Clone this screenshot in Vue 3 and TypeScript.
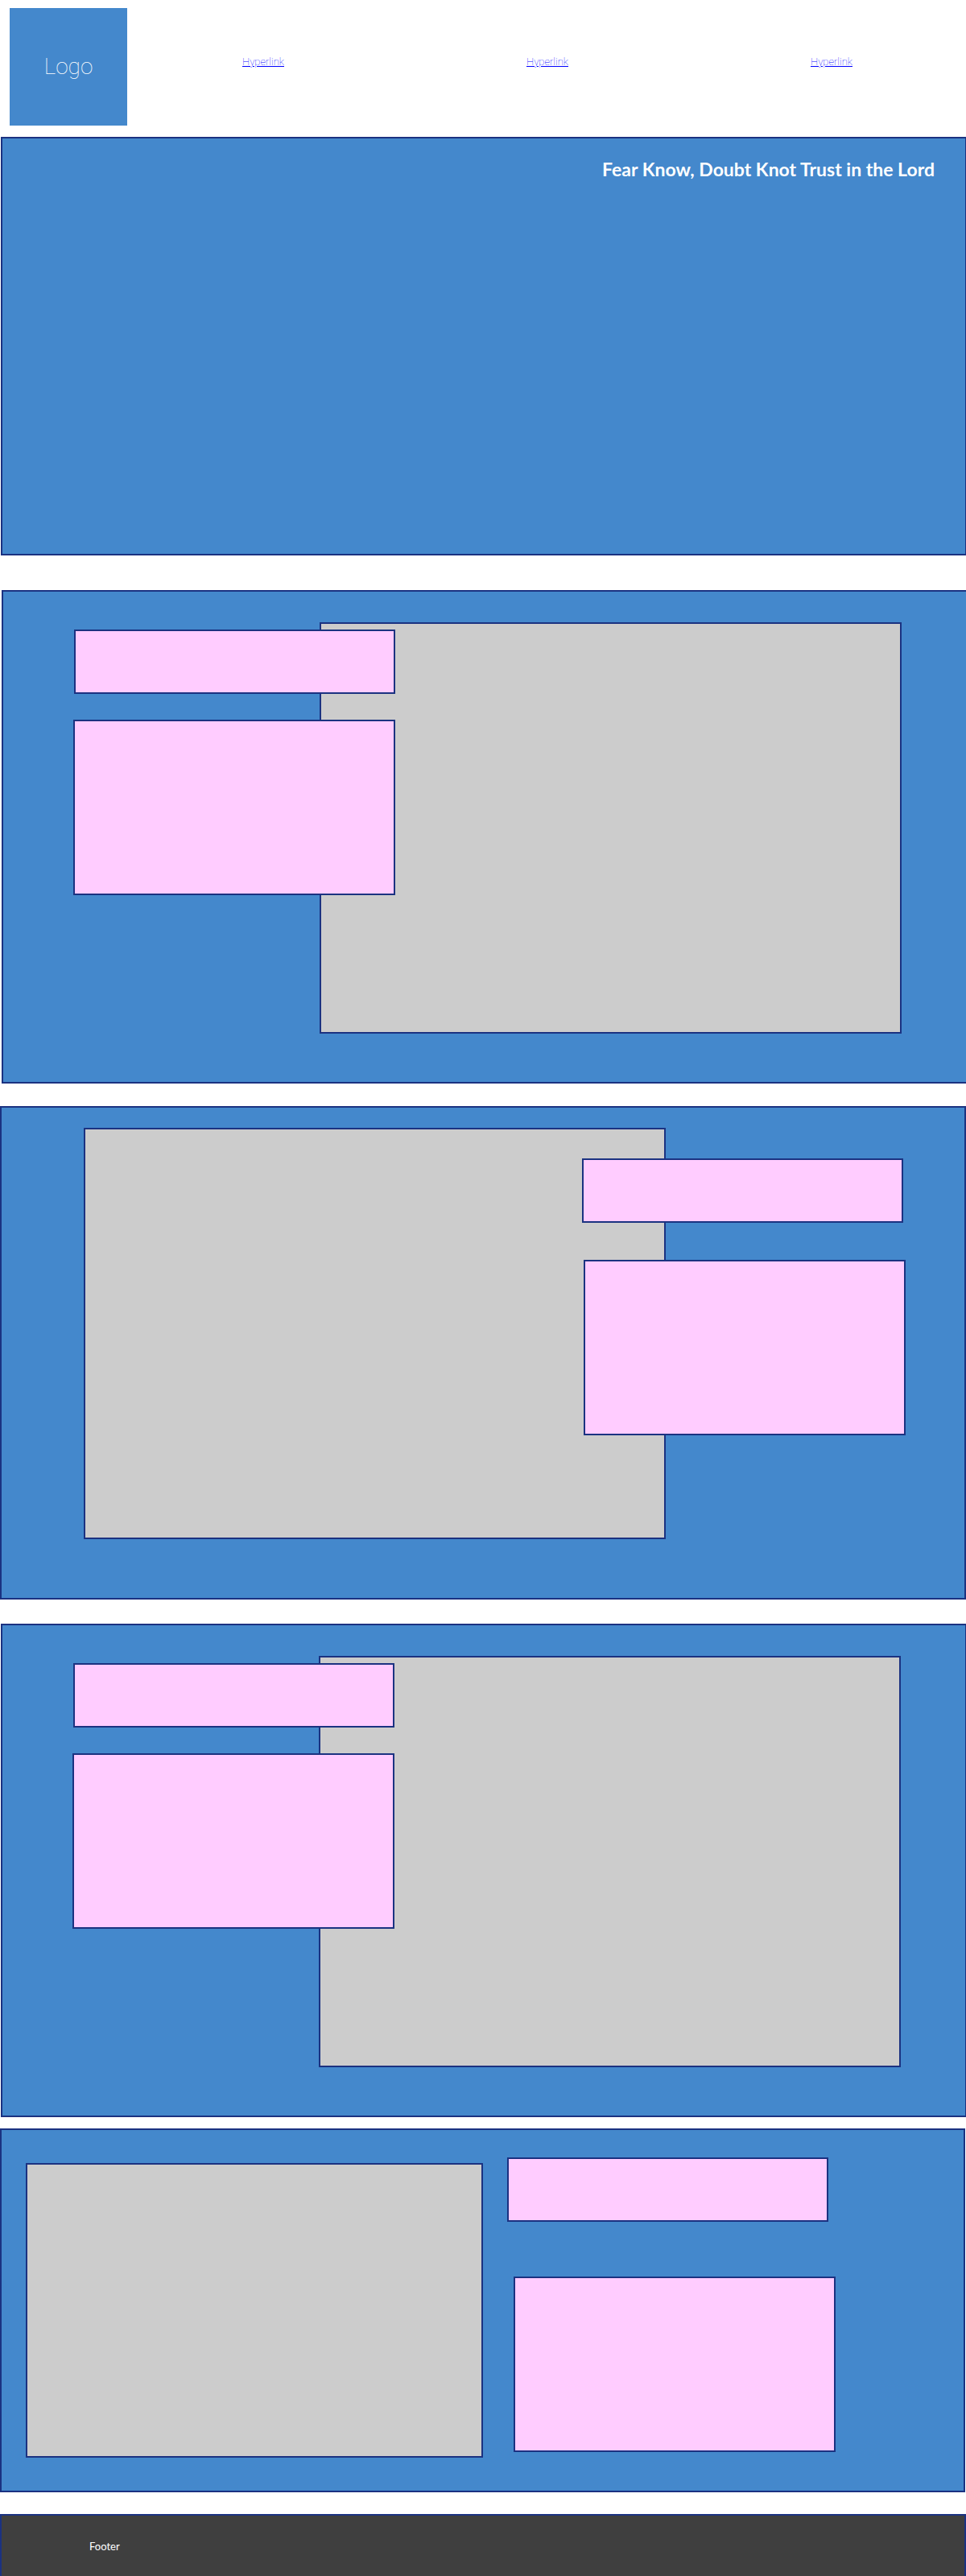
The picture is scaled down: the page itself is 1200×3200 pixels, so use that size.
<script setup lang="ts">
interface NavLink {
  id: number
  label: string
}

interface Feature {
  id: number
  variant: 'media-right' | 'media-left' | 'split'
  className: string
}

const links: NavLink[] = [
  { id: 1, label: 'Hyperlink' },
  { id: 2, label: 'Hyperlink' },
  { id: 3, label: 'Hyperlink' },
]

const features: Feature[] = [
  { id: 1, variant: 'media-right', className: 'first' },
  { id: 2, variant: 'media-left', className: 'second' },
  { id: 3, variant: 'media-right', className: 'third' },
  { id: 4, variant: 'split', className: 'fourth' },
]
</script>

<template>
  <div class="page">
    <header class="header">
      <div class="logo">Logo</div>
      <nav class="nav">
        <a v-for="link in links" :key="link.id" class="nav-link" href="#">{{ link.label }}</a>
      </nav>
    </header>

    <main>
      <section class="panel hero">
        <h1 class="hero-title">Fear Know, Doubt Knot Trust in the Lord</h1>
      </section>

      <section
        v-for="feature in features"
        :key="feature.id"
        class="panel feature"
        :class="[feature.variant, feature.className]"
      >
        <div class="box media"></div>
        <div class="box heading"></div>
        <div class="box copy"></div>
      </section>
    </main>

    <footer class="footer">Footer</footer>
  </div>
</template>

<style>
body {
  margin: 0;
  background: #ffffff;
}
</style>

<style scoped>
.page {
  overflow: hidden;
  font-family: Lato, "Liberation Sans", sans-serif;
  font-size: 13px;
  line-height: 18px;
}

.page * {
  box-sizing: border-box;
}

.header {
  display: flex;
  padding: 10px 0 14px 12px;
}

.logo {
  display: flex;
  flex: none;
  align-items: center;
  justify-content: center;
  width: 146px;
  height: 146px;
  background: #4488cc;
  color: #ffffff;
  font-family: Roboto, "Liberation Sans", sans-serif;
  font-size: 28px;
  font-weight: 100;
  line-height: 34px;
}

.nav {
  display: flex;
  flex: 1;
  align-items: flex-start;
  justify-content: space-between;
  padding: 58px 141px 0 143px;
}

.nav-link {
  color: #0000ff;
  font-family: Roboto, "Liberation Sans", sans-serif;
  font-weight: 100;
  text-decoration: underline;
}

.panel {
  border: 2px solid #1b3281;
  background: #4488cc;
}

.hero {
  min-height: 520px;
  margin: 0 -1px 43px 1px;
  padding: 23px 38px;
}

.hero-title {
  margin: 0;
  color: #ffffff;
  font-size: 23px;
  font-weight: 700;
  line-height: 30px;
  text-align: right;
}

.feature {
  display: grid;
}

.first {
  margin: 0 -2px 28px 2px;
}

.second {
  margin-bottom: 30px;
}

.third {
  margin: 0 -1px 14px 1px;
}

.fourth {
  margin: 0 1px 27px 0;
}

.box {
  border: 2px solid #1b3281;
}

.media {
  background: #cccccc;
}

.heading,
.copy {
  background: #ffccff;
}

/* Large media block on the right, text blocks overlapping its left edge */
.media-right {
  grid-template-columns: 87fr 1fr 305fr 94fr 629fr 80fr;
  grid-template-rows: 38px 9px 80px 32px 218px 172px 60px;
}

.media-right .media {
  grid-area: 2 / 4 / 7 / 6;
}

.media-right .heading {
  grid-area: 3 / 3 / 4 / 5;
}

.media-right .copy {
  grid-area: 5 / 2 / 6 / 5;
}

/* Large media block on the left, text blocks overlapping its right edge */
.media-left {
  grid-template-columns: 102fr 619fr 2fr 102fr 295fr 3fr 73fr;
  grid-template-rows: 25px 38px 80px 46px 218px 129px 73px;
}

.media-left .media {
  grid-area: 2 / 2 / 7 / 5;
}

.media-left .heading {
  grid-area: 3 / 3 / 4 / 6;
}

.media-left .copy {
  grid-area: 5 / 4 / 6 / 7;
}

/* Media and text blocks side by side */
.split {
  grid-template-columns: 30fr 568fr 30fr 8fr 391fr 9fr 159fr;
  grid-template-rows: 34px 7px 73px 68px 218px 7px 41px;
}

.split .media {
  grid-area: 3 / 2 / 7 / 3;
}

.split .heading {
  grid-area: 2 / 4 / 4 / 6;
}

.split .copy {
  grid-area: 5 / 5 / 6 / 7;
}

.footer {
  padding: 29px 109px 28px;
  border: 2px solid #1b3281;
  border-bottom: 0;
  background: #3f3f3f;
  color: #ffffff;
}
</style>
